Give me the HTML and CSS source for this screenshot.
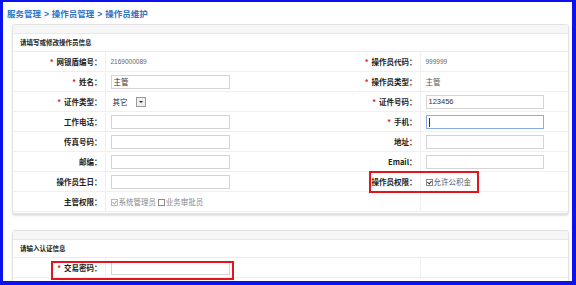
FILE: index.html
```html
<!DOCTYPE html>
<html lang="zh-CN">
<head>
    <meta charset="UTF-8">
    <title>操作员维护</title>
    <link rel="stylesheet" href="styles.css">
</head>
<body>
    <div class="frame">
        <div class="crumbs">服务管理 <span class="sep">&gt;</span> 操作员管理 <span class="sep">&gt;</span> 操作员维护</div>

        <div class="panel">
            <div class="band"></div>
            <div class="panel-title">请填写或修改操作员信息</div>
            <table class="form">
                <colgroup>
                    <col class="c1"><col class="c2"><col class="c3"><col>
                </colgroup>
                <tr>
                    <td class="label"><span class="req">*</span>网银盾编号：</td>
                    <td class="value num">2169000089</td>
                    <td class="label"><span class="req">*</span>操作员代码：</td>
                    <td class="value num">999999</td>
                </tr>
                <tr>
                    <td class="label"><span class="req">*</span>姓名：</td>
                    <td class="value"><input type="text" value="主管"></td>
                    <td class="label"><span class="req">*</span>操作员类型：</td>
                    <td class="value">主管</td>
                </tr>
                <tr>
                    <td class="label"><span class="req">*</span>证件类型：</td>
                    <td class="value">
                        <span class="select">其它<span class="arrow"></span></span>
                    </td>
                    <td class="label"><span class="req">*</span>证件号码：</td>
                    <td class="value"><input type="text" class="wide" value="123456"></td>
                </tr>
                <tr>
                    <td class="label">工作电话：</td>
                    <td class="value"><input type="text"></td>
                    <td class="label"><span class="req">*</span>手机：</td>
                    <td class="value"><input type="text" class="wide focus"></td>
                </tr>
                <tr>
                    <td class="label">传真号码：</td>
                    <td class="value"><input type="text"></td>
                    <td class="label">地址：</td>
                    <td class="value"><input type="text" class="wide"></td>
                </tr>
                <tr>
                    <td class="label">邮编：</td>
                    <td class="value"><input type="text"></td>
                    <td class="label">Email：</td>
                    <td class="value"><input type="text" class="wide"></td>
                </tr>
                <tr>
                    <td class="label">操作员生日：</td>
                    <td class="value"><input type="text"></td>
                    <td class="label">操作员权限：</td>
                    <td class="value"><span class="check on"></span>允许公积金</td>
                </tr>
                <tr>
                    <td class="label">主管权限：</td>
                    <td class="value muted"><span class="check on off"></span>系统管理员 <span class="check"></span>业务审批员</td>
                    <td class="label"></td>
                    <td class="value"></td>
                </tr>
            </table>
            <div class="mark mark-perm"></div>
        </div>

        <div class="panel second">
            <div class="band"></div>
            <div class="panel-title">请输入认证信息</div>
            <table class="form">
                <colgroup>
                    <col class="c1"><col class="c2"><col class="c3"><col>
                </colgroup>
                <tr>
                    <td class="label"><span class="req">*</span>交易密码：</td>
                    <td class="value"><input type="password"></td>
                    <td class="label"></td>
                    <td class="value"></td>
                </tr>
            </table>
            <div class="mark mark-pwd"></div>
        </div>
    </div>
</body>
</html>
```

FILE: styles.css
```css
html, body {
    margin: 0;
    padding: 0;
}
body {
    font-family: "Noto Sans CJK SC", "Liberation Sans", sans-serif;
    color: #333;
    background: #fff;
}
.frame {
    box-sizing: border-box;
    width: 576px;
    height: 285px;
    overflow: hidden;
    border-style: solid;
    border-color: #0b12ee;
    border-width: 2px 4px 4px 3px;
    background: #fff;
}
.crumbs {
    height: 22px;
    box-sizing: border-box;
    padding: 5px 0 0 4px;
    font-size: 8.5px;
    line-height: 12px;
    font-weight: bold;
    color: #2b73c9;
}
.crumbs .sep {
    font-family: "Liberation Sans", sans-serif;
    margin: 0 1px;
}
.panel {
    position: relative;
    margin: 0 3px 0 9px;
    border: 1px solid #e2e2e2;
    border-radius: 3px;
    background: #fff;
    box-shadow: 0 2px 2px rgba(0, 0, 0, 0.12);
    padding-bottom: 1px;
}
.panel.second {
    margin-top: 16px;
    height: 80px;
}
.band {
    height: 8px;
    background: #f6f6f6;
    border-bottom: 1px solid #e9e9e9;
    border-radius: 3px 3px 0 0;
}
.panel-title {
    height: 17px;
    line-height: 17px;
    padding-left: 7px;
    font-size: 6.5px;
    font-weight: bold;
    color: #222;
    border-bottom: 1px solid #ececec;
}
.form {
    width: 100%;
    border-collapse: collapse;
    table-layout: fixed;
}
.form col.c1 { width: 92px; }
.form col.c2 { width: 205px; }
.form col.c3 { width: 110px; }
.form td {
    height: 19px;
    padding: 0;
    border-bottom: 1px solid #efefef;
    font-size: 7.5px;
    white-space: nowrap;
}
.form td.label {
    text-align: right;
    padding-right: 3px;
    font-weight: bold;
    color: #222;
}
.form td.value {
    border-left: 1px solid #efefef;
    padding-left: 5px;
    color: #555;
}
.form td.value.num {
    font-family: "Liberation Sans", sans-serif;
    font-size: 6.5px;
    color: #666;
}
.form td.value.muted {
    color: #888;
}
.req {
    color: #e02020;
    margin-right: 3px;
}
input {
    box-sizing: border-box;
    width: 119px;
    height: 14px;
    margin: 0;
    padding: 0 2px;
    border: 1px solid #d4d4d4;
    font-family: "Noto Sans CJK SC", sans-serif;
    font-size: 7.5px;
    color: #333;
    vertical-align: middle;
    outline: none;
}
input.wide {
    width: 118px;
    font-family: "Liberation Sans", sans-serif;
}
input.focus {
    border-color: #86aee0;
    background: linear-gradient(#333, #333) no-repeat 2px 2px / 1px 9px, #fff;
}
.select {
    display: inline-flex;
    align-items: center;
    gap: 8px;
    height: 12px;
    padding-left: 2px;
    vertical-align: middle;
    color: #333;
}
.select .arrow {
    position: relative;
    width: 8px;
    height: 8px;
    border: 1px solid #999;
    background: #eee;
}
.select .arrow::after {
    content: "";
    position: absolute;
    left: 2px;
    top: 3px;
    border: 2px solid transparent;
    border-top: 2px solid #222;
}
.check {
    display: inline-block;
    position: relative;
    width: 5px;
    height: 5px;
    margin-right: 1px;
    border: 1px solid #8a8a8a;
    background: #fff;
    vertical-align: -1px;
}
.check.on::after {
    content: "";
    position: absolute;
    left: 1px;
    top: 0;
    width: 2px;
    height: 3px;
    border: solid #333;
    border-width: 0 1px 1px 0;
    transform: rotate(40deg);
}
.check.off {
    border-color: #b8b8b8;
}
.check.off::after {
    border-color: #aaa;
}
.mark {
    position: absolute;
    box-sizing: border-box;
    border: 2px solid #e3141b;
}
.mark-perm {
    left: 356px;
    top: 146px;
    width: 110px;
    height: 22px;
}
.mark-pwd {
    left: 38px;
    top: 30px;
    width: 183px;
    height: 19px;
}
```
